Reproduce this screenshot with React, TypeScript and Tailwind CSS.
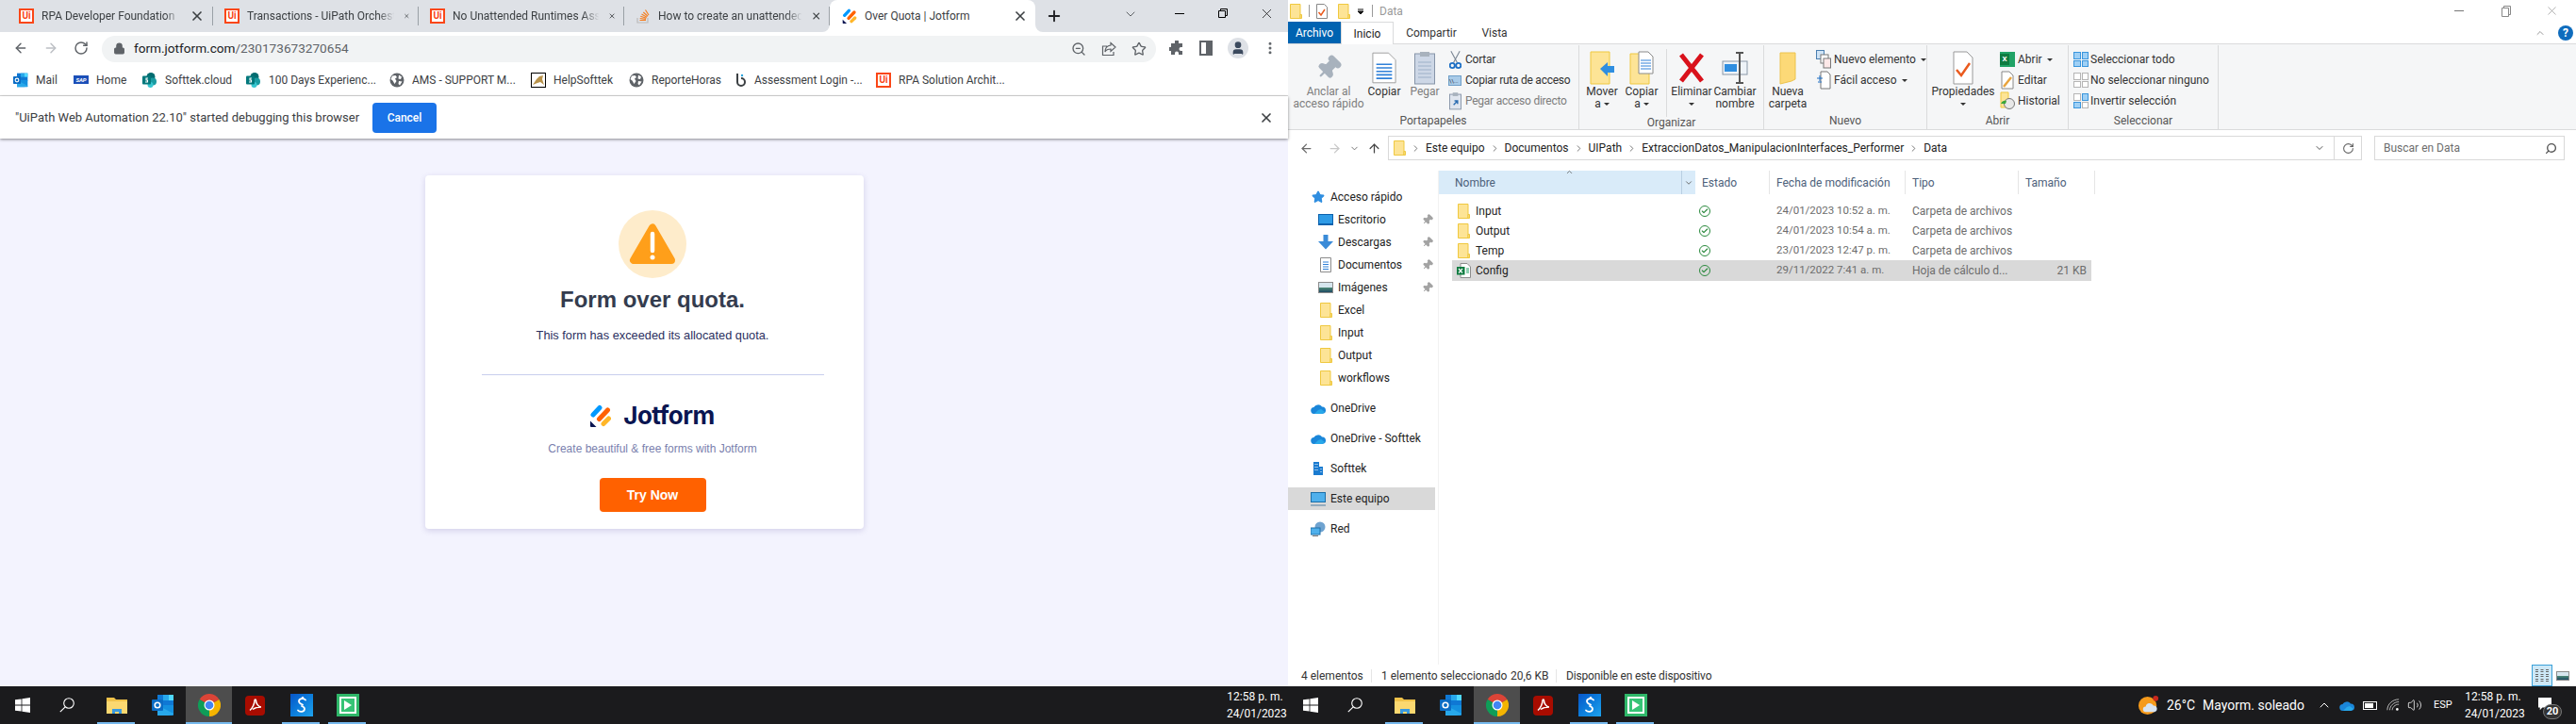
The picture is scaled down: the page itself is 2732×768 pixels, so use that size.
import { ArrowLeft, ArrowRight, ArrowUp, Check, ChevronDown, ChevronRight, ChevronUp, Lock, MoreVertical, Pin, Plus, RotateCw, Search, Star, User, Volume2, X, ZoomOut } from "lucide-react"
import type { ReactNode } from "react"

function UiIcon() {
  return (
    <div className="w-4 h-4 shrink-0 border-2 border-[#fa4616] bg-white flex items-center justify-center text-[10px] leading-none font-bold text-[#fa4616]">Ui</div>
  )
}

function JotMark({ className }: { className?: string }) {
  return (
    <svg viewBox="0 0 22 24" className={className}>
      <path d="M3 11 10 3.500" stroke="#0099ff" strokeWidth="5" strokeLinecap="round" />
      <path d="M9.500 15.500 18.500 6" stroke="#ff6100" strokeWidth="5" strokeLinecap="round" />
      <path d="M14 20.500 19.500 15" stroke="#ffb629" strokeWidth="5" strokeLinecap="round" />
      <path d="M0 17.500 6.500 24H1a1 1 0 0 1-1-1z" fill="#0a1551" />
    </svg>
  )
}

function Globe() {
  return (
    <svg viewBox="0 0 16 16" className="w-4 h-4 shrink-0">
      <circle cx="8" cy="8" r="7.500" fill="#5f6368" />
      <path d="M3 3.500 6.500 3 8 5 6 6.500 7.500 9 5.500 12 3.500 8.500 1.500 7zM10 2.500l3 2-1 2.500-2.500-.5zM10 9l3.500.5L11 13.500 9.500 12z" fill="#fff" />
    </svg>
  )
}

function SharePoint() {
  return (
    <svg viewBox="0 0 16 16" className="w-4 h-4 shrink-0">
      <circle cx="9" cy="4.500" r="4.500" fill="#036c70" />
      <circle cx="11" cy="9.500" r="4" fill="#1a9ba1" />
      <circle cx="8.500" cy="13" r="3" fill="#37c6d0" />
      <rect x="0" y="3.500" width="9" height="9" rx="1" fill="#03787c" />
      <path d="M6 6H4v2h1.500v2H3" fill="none" stroke="#fff" strokeWidth="1.100" />
    </svg>
  )
}

function OutlookIcon({ className }: { className?: string }) {
  return (
    <svg viewBox="0 0 24 24" className={className}>
      <rect x="6" y="1" width="17" height="12" fill="#0f78d4" />
      <rect x="12" y="1" width="6" height="6" fill="#28a8ea" />
      <rect x="18" y="1" width="5" height="6" fill="#50d9ff" />
      <path d="M6 12h17v10a1 1 0 0 1-1 1H6z" fill="#1490df" />
      <path d="m6 12 17 9v1l-6 1H6z" fill="#28a8ea" />
      <rect x="0" y="6" width="12" height="12" rx="1" fill="#0b6cc4" />
      <circle cx="6" cy="12" r="2.800" fill="none" stroke="#fff" strokeWidth="1.600" />
    </svg>
  )
}

function Bookmarks() {
  const items: { icon: ReactNode; label: string; w: number }[] = [
    { icon: <OutlookIcon className="w-4 h-4 shrink-0" />, label: "Mail", w: 23 },
    { icon: <div className="w-4 h-[9px] shrink-0 bg-[#1b4fb8] text-white text-[6px] leading-[9px] font-bold text-center italic">SAP</div>, label: "Home", w: 32 },
    { icon: <SharePoint />, label: "Softtek.cloud", w: 69 },
    { icon: <SharePoint />, label: "100 Days Experienc...", w: 111 },
    { icon: <Globe />, label: "AMS - SUPPORT M...", w: 109 },
    {
      icon: (
        <div className="w-4 h-4 shrink-0 border border-black bg-white flex items-end">
          <svg viewBox="0 0 14 14" className="w-full h-full"><path d="M1 12 5 6l3-3 4-1-1 4 2 6-4-3-3 1z" fill="#b8924a" /></svg>
        </div>
      ),
      label: "HelpSofttek",
      w: 63,
    },
    { icon: <Globe />, label: "ReporteHoras", w: 72 },
    {
      icon: (
        <svg viewBox="0 0 12 16" className="w-3 h-4 shrink-0">
          <path d="M2 1v9a4 4 0 1 0 4-4" fill="none" stroke="#3c4043" strokeWidth="2" />
          <circle cx="7" cy="3" r="1.200" fill="#29a3dc" />
        </svg>
      ),
      label: "Assessment Login -...",
      w: 112,
    },
    { icon: <UiIcon />, label: "RPA Solution Archit...", w: 111 },
  ]
  return (
    <div className="h-[34px] bg-white border-b border-[#d9d9d9] flex items-center pl-[14px] gap-[17px] text-xs text-[#3c4043]">
      {items.map((b) => (
        <div key={b.label} className="flex items-center gap-2">
          {b.icon}
          <span className="whitespace-nowrap" style={{ width: b.w }}>{b.label}</span>
        </div>
      ))}
    </div>
  )
}

function ChromeTab({ title, icon, active }: { title: string; icon: ReactNode; active?: boolean }) {
  if (active) {
    return (
      <div className="relative w-[218px] h-[34px] bg-white rounded-t-lg flex items-center pl-[13px] pr-[8px] gap-2 text-xs text-[#3c4043]">
        <svg viewBox="0 0 8 8" className="absolute -left-2 bottom-0 w-2 h-2" fill="#fff"><path d="M8 0v8H0a8 8 0 0 0 8-8z" /></svg>
        <svg viewBox="0 0 8 8" className="absolute -right-2 bottom-0 w-2 h-2" fill="#fff"><path d="M0 0v8h8a8 8 0 0 1-8-8z" /></svg>
        {icon}
        <span className="flex-1 whitespace-nowrap">{title}</span>
        <X className="w-4 h-4 text-[#3c4043]" strokeWidth={2.500} />
      </div>
    )
  }
  return (
    <div className="w-[218px] h-[34px] flex items-center">
      <div className="w-full h-[20px] flex items-center pl-3 pr-[7px] gap-2 border-r border-[#9aa0a6] text-xs text-[#3c4043]">
        {icon}
        <span className="flex-1 whitespace-nowrap [mask-image:linear-gradient(to_right,black_88%,transparent_99%)]">{title}</span>
        <X className="w-4 h-4 mr-px text-[#3c4043]" strokeWidth={2.500} />
      </div>
    </div>
  )
}

function ChromeWindow() {
  const stack = (
    <svg viewBox="0 0 16 16" className="w-4 h-4 shrink-0" fill="none" stroke="#f48024" strokeWidth="1.200">
      <path d="M2 10v5h11v-5" stroke="#bcbbbb" />
      <path d="M4.500 12.500h6.500M4.700 10.500l6.300.8M5.300 8.300l6.100 2M6.500 6l5.500 3.200M8.300 4l4.800 4.300M10.500 1.500l3.500 5.500" />
    </svg>
  )
  return (
    <div className="flex-1 flex flex-col min-h-0">
      <div className="h-[34px] bg-[#dee1e6] flex pl-2">
        <ChromeTab title="RPA Developer Foundation" icon={<UiIcon />} />
        <ChromeTab title="Transactions - UiPath Orchest" icon={<UiIcon />} />
        <ChromeTab title="No Unattended Runtimes Ass" icon={<UiIcon />} />
        <ChromeTab title="How to create an unattendec" icon={stack} />
        <ChromeTab title="Over Quota | Jotform" active icon={<JotMark className="w-4 h-4 shrink-0" />} />
        <div className="w-10 flex items-center justify-center">
          <Plus className="w-[18px] h-[18px] text-[#202124]" strokeWidth={2.500} />
        </div>
        <div className="flex-1" />
        <div className="w-[58px] pt-[7px] flex justify-center"><ChevronDown className="w-4 h-4 text-[#3c4043]" strokeWidth={1.200} /></div>
        <div className="w-[46px] pt-[7px] flex justify-center"><div className="w-[10px] h-px bg-black mt-[7px]" /></div>
        <div className="w-[46px] pt-[9px] flex justify-center">
          <svg viewBox="0 0 10 10" className="w-[10px] h-[10px]" fill="none" stroke="#000"><path d="M.500 2.500h7v7h-7zM2.500 2.500v-2h7v7h-2" /></svg>
        </div>
        <div className="w-[46px] pt-[6px] flex justify-center"><X className="w-[17px] h-[17px] text-black" strokeWidth={1} /></div>
      </div>

      <div className="h-[34px] bg-white flex items-center text-[#5f6368]">
        <div className="w-[108px] flex items-center pl-[14px] gap-4">
          <ArrowLeft className="w-4 h-4" strokeWidth={2.200} />
          <ArrowRight className="w-4 h-4 text-[#bcbfc4]" strokeWidth={2.200} />
          <RotateCw className="w-4 h-4" strokeWidth={2.200} />
        </div>
        <div className="w-[1118px] h-7 mt-px rounded-full bg-[#f1f3f4] flex items-center pl-[12px] pr-[10px]">
          <Lock className="w-[13px] h-[13px] fill-[#5f6368]" />
          <span className="ml-[9px] text-[13.6px] text-[#202124]">form.jotform.com<span className="text-[#5f6368]">/230173673270654</span></span>
          <div className="flex-1" />
          <ZoomOut className="w-4 h-4" />
          <svg viewBox="0 0 16 16" className="w-4 h-4 ml-4" fill="none" stroke="#5f6368" strokeWidth="1.200">
            <path d="M10 1.500 15 6l-5 4.500V8C7 8 5 9 4 11c0-4 2-6.500 6-7zM13 11v3.500H1.500V5H6" />
          </svg>
          <Star className="w-4 h-4 ml-4" strokeWidth={2} />
        </div>
        <div className="flex items-center pl-[14px] gap-[16px]">
          <svg viewBox="0 0 16 16" className="w-4 h-4" fill="#5f6368">
            <path d="M6 1a2 2 0 0 1 4 0v2h4v4h-1.500a2 2 0 0 0 0 4H14v4h-4v-1.500a2 2 0 0 0-4 0V15H2v-4H.5a2 2 0 0 1 0-4H2V3h4z" />
          </svg>
          <div className="w-[14px] h-[16px] border-2 border-[#5f6368] flex justify-end"><div className="w-[5px] h-full bg-[#5f6368]" /></div>
          <div className="w-[22px] h-[22px] rounded-full bg-[#dee1e6] flex items-center justify-center">
            <User className="w-4 h-4 fill-[#3c4a5e] text-[#3c4a5e]" />
          </div>
          <MoreVertical className="w-4 h-4 -ml-[1px]" strokeWidth={2.500} />
        </div>
      </div>

      <Bookmarks />

      <div className="relative z-10 h-[45px] bg-white flex items-center pl-4 pr-[15px] shadow-[0_1px_3px_rgba(0,0,0,0.45)] text-[13px] text-[#3c4043]">
        <span className="w-[367px] whitespace-nowrap">"UiPath Web Automation 22.10" started debugging this browser</span>
        <button className="ml-3 w-[68px] h-8 rounded bg-[#1a73e8] text-white text-xs font-medium">Cancel</button>
        <div className="flex-1" />
        <X className="w-4 h-4" strokeWidth={2.500} />
      </div>

      <div className="flex-1 bg-[#f3f3fe] flex justify-center font-['Liberation_Sans',sans-serif]">
        <div className="w-[465px] h-[375px] mt-[39px] pl-[18px] bg-white rounded shadow-[0_2px_6px_rgba(86,70,150,0.2)] flex flex-col items-center">
          <svg viewBox="0 0 72 72" className="w-[72px] h-[72px] mt-[37px]">
            <circle cx="36" cy="36" r="36" fill="#feeccb" />
            <path d="M36 18.500 16 53h40z" fill="#ff9f1a" stroke="#ff9f1a" strokeWidth="8" strokeLinejoin="round" />
            <path d="M36 25v18" stroke="#fff" strokeWidth="4.500" strokeLinecap="round" />
            <circle cx="36" cy="50" r="2.500" fill="#fff" />
          </svg>
          <h1 className="mt-2 h-[30px] text-2xl leading-[30px] font-bold text-[#343c4e]">Form over quota.</h1>
          <p className="mt-[14px] h-[18px] text-[12.8px] leading-[18px] text-[#2b3060]">This form has exceeded its allocated quota.</p>
          <div className="mt-8 w-[363px] h-px bg-[#c8ceed]" />
          <div className="mt-[31px] h-6 flex items-center gap-[13px]">
            <JotMark className="w-[22px] h-6" />
            <span className="text-[26px] leading-6 font-bold tracking-[-0.5px] font-['Inter',sans-serif] text-[#0a1551]">Jotform</span>
          </div>
          <p className="mt-[15px] h-4 text-xs leading-4 text-[#7a7fae]">Create beautiful &amp; free forms with Jotform</p>
          <button className="mt-[23px] w-[113px] h-9 rounded-sm bg-[#ff6100] text-white text-sm font-bold">Try Now</button>
        </div>
      </div>
    </div>
  )
}

function Folder({ className = "w-[13px] h-4 shrink-0" }: { className?: string }) {
  return (
    <svg viewBox="0 0 13 16" className={className}>
      <path d="M.500.500h10.500v15H.500z" fill="#fde496" stroke="#efc83f" />
      <path d="M11 11.500h1.500v4H11z" fill="#fde496" stroke="#efc83f" />
    </svg>
  )
}

function Caret() {
  return <span className="inline-block w-0 h-0 border-x-[3px] border-x-transparent border-t-[3px] border-t-[#333] align-middle" />
}

function BigBtn({ w, icon, children, muted }: { w: number; icon: ReactNode; children: ReactNode; muted?: boolean }) {
  return (
    <div className="shrink-0 flex flex-col items-center" style={{ width: w }}>
      <div className="h-[37px] mt-[5px] flex items-center justify-center">{icon}</div>
      <div className={`mt-[1px] text-xs leading-[13px] text-center whitespace-nowrap ${muted ? "text-[#7d7d7d]" : "text-[#333]"}`}>{children}</div>
    </div>
  )
}

function SmallBtn({ icon, label, caret, muted, tight, iconW = 16 }: { icon: ReactNode; label: string; caret?: boolean; muted?: boolean; tight?: boolean; iconW?: number }) {
  return (
    <div className={`h-[22px] flex items-center gap-[2px] text-xs whitespace-nowrap ${muted ? "text-[#7d7d7d]" : "text-[#333]"}`}>
      <div className="flex justify-center" style={{ width: iconW }}>{icon}</div>
      <span className={tight ? "tracking-[-0.25px]" : ""}>{label}</span>
      {caret && <span className="ml-[3px]"><Caret /></span>}
    </div>
  )
}

function Group({ w, label, children }: { w: number; label: string; children: ReactNode }) {
  return (
    <div className="shrink-0 h-full flex flex-col pb-[1px] border-r border-[#dadbdc]" style={{ width: w }}>
      <div className="h-[74px] flex">{children}</div>
      <div className="h-[16px] text-xs leading-4 text-center text-[#555]">{label}</div>
    </div>
  )
}

function Page({ lines, className = "w-7 h-9" }: { lines: string; className?: string }) {
  return (
    <svg viewBox="0 0 28 36" className={className}>
      <path d="M1 1h18l8 8v26H1z" fill="#fff" stroke="#9a9a9a" />
      <path d="M5 14h18M5 18h18M5 22h18M5 26h18M5 30h18" stroke={lines} strokeWidth="1.800" />
    </svg>
  )
}

function Ribbon() {
  return (
    <div className="h-[92px] bg-[#f5f6f7] border-y border-[#dadbdc] flex pt-[1px]">
      <Group w={309} label="Portapapeles">
        <div className="w-[8px]" />
        <BigBtn w={70} muted icon={<Pin className="w-7 h-7 rotate-45 text-[#a8b2bd] fill-[#a8b2bd]" />}>Anclar al<br />acceso rápido</BigBtn>
        <BigBtn w={48} icon={<Page lines="#2f80d8" className="w-[26px] h-9" />}>Copiar</BigBtn>
        <BigBtn w={38} muted icon={
          <svg viewBox="0 0 22 36" className="w-[22px] h-9">
            <rect x=".5" y="3" width="21" height="32" fill="#cdd7e6" stroke="#8694a8" />
            <rect x="6" y="1" width="10" height="5" fill="#a8b2bd" />
            <path d="M4 12h14M4 16h14M4 20h14M4 24h14M4 28h14" stroke="#9db0c8" />
          </svg>
        }>Pegar</BigBtn>
        <div className="w-[4px]" />
        <div className="pt-[4px]">
          <SmallBtn tight iconW={18} icon={
            <svg viewBox="0 0 14 22" className="w-[13px] h-[21px]" fill="none" stroke="#7b8794" strokeWidth="1.200">
              <path d="M2 1l7 13M12 1 5 14" />
              <circle cx="3.500" cy="17.500" r="2.800" stroke="#1d6fc4" strokeWidth="2" />
              <circle cx="10.500" cy="17.500" r="2.800" stroke="#1d6fc4" strokeWidth="2" />
            </svg>
          } label="Cortar" />
          <SmallBtn tight iconW={18} icon={<div className="w-[14px] h-[11px] bg-[#a9cbe8] border border-[#6f9fc8] text-[6px] leading-[9px] text-[#223]">\\...</div>} label="Copiar ruta de acceso" />
          <SmallBtn tight iconW={18} muted icon={
            <svg viewBox="0 0 14 20" className="w-[13px] h-[19px]">
              <rect x=".5" y="2" width="13" height="17" fill="#dfe5ee" stroke="#8694a8" />
              <rect x="4" y="0" width="6" height="4" fill="#a8b2bd" />
              <path d="M5 14l4-4M6 9.500h3.500V13" stroke="#2b6cb0" strokeWidth="1.500" fill="none" />
            </svg>
          } label="Pegar acceso directo" />
        </div>
      </Group>

      <Group w={196} label="Organizar">
        <BigBtn w={48} icon={
          <svg viewBox="0 0 26 36" className="w-[26px] h-9">
            <path d="M1 1h20v34H1z" fill="#fde496" stroke="#efc83f" />
            <path d="M11 19l8-7v4h7v7h-7v4z" fill="#2f8ee0" />
          </svg>
        }>Mover<br />a <Caret /></BigBtn>
        <BigBtn w={36} icon={
          <svg viewBox="0 0 26 36" className="w-[26px] h-9">
            <path d="M1 3h20v32H1z" fill="#fde496" stroke="#efc83f" />
            <path d="M10 1h10l5 5v18H10z" fill="#fff" stroke="#8a8a8a" />
            <path d="M12 10h11M12 13h11M12 16h11M12 19h11" stroke="#2f80d8" />
          </svg>
        }>Copiar<br />a <Caret /></BigBtn>
        <div className="w-px h-[72px] mt-[4px] ml-[8px] mr-[3px] bg-[#dadbdc]" />
        <BigBtn w={46} icon={
          <svg viewBox="0 0 26 32" className="w-[26px] h-8"><path d="M2 2l22 28M24 2 2 30" stroke="#d9111b" strokeWidth="5" /></svg>
        }>Eliminar<br /><Caret /></BigBtn>
        <BigBtn w={46} icon={
          <svg viewBox="0 0 28 36" className="w-7 h-9" fill="none">
            <rect x="1" y="11" width="26" height="14" fill="#eef3f8" stroke="#8a98a8" />
            <rect x="3" y="14" width="13" height="8" fill="#2f8ee0" />
            <path d="M19 2v32M15 2h8M15 34h8" stroke="#555" strokeWidth="2" />
          </svg>
        }>Cambiar<br />nombre</BigBtn>
      </Group>

      <Group w={173} label="Nuevo">
        <BigBtn w={50} icon={
          <svg viewBox="0 0 18 36" className="w-[18px] h-9"><path d="M1 2h16v28l-4 2-12 3z" fill="#fcd977" stroke="#ecc34d" /></svg>
        }>Nueva<br />carpeta</BigBtn>
        <div className="w-[4px]" />
        <div className="pt-[4px]">
          <SmallBtn iconW={18} caret icon={
            <svg viewBox="0 0 16 20" className="w-4 h-[20px]">
              <rect x=".5" y=".5" width="8" height="9" fill="#cfe3f5" stroke="#4b7fb0" />
              <rect x="5" y="5" width="8" height="9" fill="#fff" stroke="#777" />
              <rect x="8" y="9" width="7.500" height="10" fill="#fde8e8" stroke="#777" />
            </svg>
          } label="Nuevo elemento" />
          <SmallBtn iconW={18} caret icon={
            <svg viewBox="0 0 16 20" className="w-4 h-[20px]" fill="none">
              <path d="M5 1h7l3 3v15H5z" fill="#fff" stroke="#777" />
              <path d="M1 8h6M4 5v6M2 12h4" stroke="#1d6fc4" />
            </svg>
          } label="Fácil acceso" />
        </div>
      </Group>

      <Group w={150} label="Abrir">
        <BigBtn w={76} icon={
          <svg viewBox="0 0 22 36" className="w-[22px] h-9">
            <path d="M1 1h14l6 6v28H1z" fill="#fff" stroke="#999" />
            <path d="M4 20l5 6 9-13" fill="none" stroke="#ea5a1e" strokeWidth="2.500" />
          </svg>
        }><span>Propiedades</span><br /><Caret /></BigBtn>
        <div className="pt-[4px]">
          <SmallBtn iconW={18} caret icon={
            <div className="relative w-4 h-4 bg-[#21a366]"><div className="absolute left-0 top-[2px] w-[10px] h-3 bg-[#107c41] text-white text-[8px] leading-3 font-bold text-center">X</div></div>
          } label="Abrir" />
          <SmallBtn iconW={18} icon={
            <svg viewBox="0 0 14 20" className="w-[14px] h-[20px]" fill="none">
              <path d="M1 1h8l4 4v14H1z" fill="#fff" stroke="#888" />
              <path d="M3 17l8-10" stroke="#e8a33d" strokeWidth="2.500" />
            </svg>
          } label="Editar" />
          <SmallBtn iconW={18} icon={
            <svg viewBox="0 0 16 20" className="w-4 h-[20px]">
              <path d="M1 1h8v16H1z" fill="#fde496" stroke="#efc83f" />
              <circle cx="10" cy="13" r="5.500" fill="#e8e8e8" stroke="#777" />
              <path d="M1 13c1-3 4-4 6-3l-1 3z" fill="#3aa63a" />
            </svg>
          } label="Historial" />
        </div>
      </Group>

      <Group w={159} label="Seleccionar">
        <div className="pt-[4px] pl-[5px]">
          <SmallBtn iconW={16} icon={<SelGrid cells={["on", "on", "on", "on"]} />} label="Seleccionar todo" />
          <SmallBtn iconW={16} icon={<SelGrid cells={["off", "off", "off", "off"]} />} label="No seleccionar ninguno" />
          <SmallBtn iconW={16} icon={<SelGrid cells={["off", "on", "on", "off"]} />} label="Invertir selección" />
        </div>
      </Group>
      <div className="flex-1" />
    </div>
  )
}

function SelGrid({ cells }: { cells: string[] }) {
  return (
    <div className="w-4 h-4 grid grid-cols-2 gap-px">
      {cells.map((c, i) => (
        <div key={i} className={c === "on" ? "bg-[#9fd0f5] border border-[#3a96dd]" : "bg-white border border-[#b5b5b5]"} />
      ))}
    </div>
  )
}

function AddressBar() {
  const crumbs = ["Este equipo", "Documentos", "UIPath", "ExtraccionDatos_ManipulacionInterfaces_Performer", "Data"]
  return (
    <div className="h-[43px] bg-white flex items-start pt-[6px] text-xs">
      <div className="w-[106px] h-[26px] flex items-center pl-[12px] text-[#6b6b6b]">
        <ArrowLeft className="w-[15px] h-[15px]" />
        <ArrowRight className="w-[15px] h-[15px] ml-[15px] text-[#c8c8c8]" />
        <ChevronDown className="w-[11px] h-[11px] ml-[8px]" />
        <ArrowUp className="w-[15px] h-[15px] ml-[8px] text-[#444]" />
      </div>
      <div className="w-[1033px] h-[26px] border border-[#d9d9d9] flex items-center pl-[5px]">
        <Folder />
        {crumbs.map((c) => (
          <div key={c} className="flex items-center">
            <ChevronRight className="w-[11px] h-[11px] mx-[5px] text-[#6b6b6b]" />
            <span className="text-[#222] whitespace-nowrap">{c}</span>
          </div>
        ))}
        <div className="flex-1" />
        <ChevronDown className="w-3 h-3 mr-[9px] text-[#555]" />
        <div className="w-[29px] h-full border-l border-[#d9d9d9] flex items-center justify-center">
          <RotateCw className="w-[13px] h-[13px] text-[#666]" />
        </div>
      </div>
      <div className="ml-[13px] w-[202px] h-[26px] border border-[#d9d9d9] flex items-center pl-[9px] pr-[7px] text-[#6d6d6d]">
        <span className="flex-1">Buscar en Data</span>
        <Search className="w-[13px] h-[13px] -scale-x-100 text-[#555]" strokeWidth={2.500} />
      </div>
    </div>
  )
}

function CloudIcon({ className = "w-4 h-[11px]" }: { className?: string }) {
  return (
    <svg viewBox="0 0 16 11" className={className}>
      <path d="M4 11a3.500 3.500 0 0 1-.5-7A5 5 0 0 1 12 3.500 3.500 3.500 0 0 1 12.500 11z" fill="#1a86d9" />
      <path d="M4 11 8 7l3-1 4 3-2.500 2z" fill="#28a8ea" />
    </svg>
  )
}

function NavPane() {
  const pinned = [
    {
      label: "Escritorio",
      icon: <div className="w-4 h-[12px] bg-[#2e9be6] border border-[#0c62ad] border-b-2" />,
    },
    {
      label: "Descargas",
      icon: (
        <svg viewBox="0 0 16 16" className="w-4 h-4"><path d="M5.500 0h5v7H16l-8 8.500L0 7h5.500z" fill="#3a8bd8" /></svg>
      ),
    },
    {
      label: "Documentos",
      icon: (
        <svg viewBox="0 0 12 16" className="w-3 h-4">
          <path d="M.500.500h11v15H.500z" fill="#fff" stroke="#8c8c8c" />
          <path d="M3 5h6M3 7.500h6M3 10h6M3 12.500h6" stroke="#2f80d8" />
        </svg>
      ),
    },
    {
      label: "Imágenes",
      icon: (
        <div className="w-4 h-[12px] border border-[#8c8c8c] bg-[linear-gradient(#d6e6ee_50%,#4d8a76_50%,#1f4a63)]" />
      ),
    },
  ]
  const Row = ({ icon, label, sub, pin, active, gap }: { icon: ReactNode; label: string; sub?: boolean; pin?: boolean; active?: boolean; gap?: boolean }) => (
    <div className={`h-6 flex items-center text-xs text-[#222] ${gap ? "mt-2" : ""} ${active ? "bg-[#d9d9d9]" : ""} ${sub ? "pl-[32px]" : "pl-6"}`}>
      <div className="w-4 flex justify-center">{icon}</div>
      <span className="flex-1 ml-[5px] whitespace-nowrap">{label}</span>
      {pin && <Pin className="w-3 h-3 mr-[2px] rotate-45 text-[#a3a3a3] fill-[#a3a3a3]" />}
    </div>
  )
  return (
    <div className="w-[160px] h-full pt-4 border-r border-[#f2f2f2] pr-[3px] shrink-0">
      <Row label="Acceso rápido" icon={<Star className="w-[14px] h-[14px] text-[#2f8ee0] fill-[#2f8ee0]" />} />
      {pinned.map((p) => <Row key={p.label} sub pin label={p.label} icon={p.icon} />)}
      {["Excel", "Input", "Output", "workflows"].map((n) => <Row key={n} sub label={n} icon={<Folder />} />)}
      <Row gap label="OneDrive" icon={<CloudIcon />} />
      <Row gap label="OneDrive - Softtek" icon={<CloudIcon />} />
      <Row gap label="Softtek" icon={
        <svg viewBox="0 0 10 14" className="w-[10px] h-[14px]">
          <path d="M0 0h6v14H0zM6 5h4v9H6z" fill="#1a7bd0" />
          <path d="M1.500 2h1v1h-1zM3.500 2h1v1h-1zM1.500 5h1v1h-1zM3.500 5h1v1h-1zM1.500 8h1v1h-1zM3.500 8h1v1h-1zM7.500 7h1v1h-1zM7.500 10h1v1h-1z" fill="#fff" />
        </svg>
      } />
      <Row gap active label="Este equipo" icon={
        <svg viewBox="0 0 16 15" className="w-4 h-[15px]">
          <rect x=".5" y=".5" width="15" height="10" fill="#4fb0ec" stroke="#1c6fa8" />
          <path d="M0 14h16" stroke="#7d9db5" strokeWidth="1.500" />
        </svg>
      } />
      <Row gap label="Red" icon={
        <svg viewBox="0 0 16 16" className="w-4 h-4">
          <circle cx="10" cy="6" r="5.500" fill="#6fa3d0" />
          <rect x="0" y="7" width="10" height="7" fill="#4fb0ec" stroke="#1c6fa8" />
          <path d="M2 15.500h6" stroke="#777" />
        </svg>
      } />
    </div>
  )
}

function ExcelFile() {
  return (
    <svg viewBox="0 0 15 16" className="w-[15px] h-4 shrink-0">
      <path d="M4 .500h7l3.500 3.500v11.500H4z" fill="#fff" stroke="#8c8c8c" />
      <path d="M10 6h3M10 8h3M10 10h3" stroke="#21a366" />
      <rect x="0" y="4" width="8.500" height="8.500" fill="#107c41" />
      <path d="M2 6l4 4.500M6 6l-4 4.500" stroke="#fff" strokeWidth="1.200" />
    </svg>
  )
}

function FileList() {
  const rows = [
    { name: "Input", date: "24/01/2023 10:52 a. m.", type: "Carpeta de archivos", size: "" },
    { name: "Output", date: "24/01/2023 10:54 a. m.", type: "Carpeta de archivos", size: "" },
    { name: "Temp", date: "23/01/2023 12:47 p. m.", type: "Carpeta de archivos", size: "" },
    { name: "Config", date: "29/11/2022 7:41 a. m.", type: "Hoja de cálculo d...", size: "21 KB", selected: true },
  ]
  return (
    <div className="flex-1 min-w-0 text-xs">
      <div className="h-[25px] flex text-[#4c607a]">
        <div className="relative w-[272px] h-full bg-[#d9ebf9] flex items-center pl-[17px]">
          <span className="flex-1">Nombre</span>
          <ChevronUp className="absolute left-[134px] -top-[3px] w-[9px] h-[9px] text-[#555]" />
          <div className="w-[15px] h-full border-l border-[#b8cfe3] flex items-center justify-center">
            <ChevronDown className="w-[10px] h-[10px] text-[#555]" />
          </div>
        </div>
        {[
          { t: "Estado", w: 79 },
          { t: "Fecha de modificación", w: 144 },
          { t: "Tipo", w: 120 },
          { t: "Tamaño", w: 81 },
        ].map((c) => (
          <div key={c.t} className="h-full flex items-center pl-[7px] border-r border-[#e5e5e5]" style={{ width: c.w }}>{c.t}</div>
        ))}
      </div>
      <div className="mt-[7px] ml-[14px] w-[678px]">
        {rows.map((r) => (
          <div key={r.name} className={`flex items-center text-[#6d6d6d] ${r.selected ? "bg-[#d9d9d9] h-[22px]" : "h-[21px]"}`}>
            <div className="w-[258px] flex items-center pl-[5px] gap-[5px] text-[#222]">
              {r.selected ? <ExcelFile /> : <div className="w-[15px] flex justify-center"><Folder /></div>}
              <span>{r.name}</span>
            </div>
            <div className="w-[79px] pl-[4px]">
              <div className="w-3 h-3 rounded-full border-[1.500px] border-[#2b8a3e] flex items-center justify-center">
                <Check className="w-2 h-2 text-[#2b8a3e]" strokeWidth={3.500} />
              </div>
            </div>
            <div className="w-[144px] pl-[7px] text-[11.5px] whitespace-nowrap">{r.date}</div>
            <div className="w-[120px] pl-[7px] whitespace-nowrap">{r.type}</div>
            <div className="w-[77px] pr-[5px] text-right">{r.size}</div>
          </div>
        ))}
      </div>
    </div>
  )
}

function Explorer() {
  return (
    <div className="flex-1 flex flex-col min-h-0 bg-white">
      <div className="h-[23px] flex items-center pl-[2px] text-xs">
        <Folder />
        <div className="w-px h-[13px] mx-[7px] bg-[#999]" />
        <svg viewBox="0 0 12 16" className="w-3 h-4">
          <path d="M.500.500h8l3 3v12h-11z" fill="#fff" stroke="#888" />
          <path d="M2.500 9l2.500 3 4-6" fill="none" stroke="#ea5a1e" strokeWidth="1.500" />
        </svg>
        <div className="w-[11px]" />
        <Folder />
        <svg viewBox="0 0 8 8" className="w-2 h-2 ml-[7px]"><path d="M1 2h6M1 4l3 3 3-3z" stroke="#111" fill="#111" /></svg>
        <div className="w-px h-[13px] ml-[8px] mr-[7px] bg-[#999]" />
        <span className="text-[#999]">Data</span>
        <div className="flex-1" />
        <div className="w-[10px] h-px bg-[#777] mr-[40px]" />
        <svg viewBox="0 0 10 12" className="w-[10px] h-3 mr-[36px]" fill="none" stroke="#888"><path d="M.500 2.500h7v9h-7zM2.500 2.500v-2h7v9h-2" /></svg>
        <X className="w-[15px] h-[15px] mr-[18px] text-[#888]" strokeWidth={1} />
      </div>
      <div className="h-[23px] flex items-center text-xs relative">
        <div className="w-14 h-full bg-[#0063b1] text-white flex items-center justify-center">Archivo</div>
        <div className="relative z-10 w-14 h-[24px] mt-[1px] bg-white border-x border-t border-[#dadbdc] flex items-center justify-center text-[#222]">Inicio</div>
        <div className="w-20 text-center text-[#333]">Compartir</div>
        <div className="w-[54px] text-center text-[#333]">Vista</div>
        <div className="flex-1" />
        <ChevronUp className="w-3 h-3 mr-[13px] text-[#999]" />
        <div className="w-4 h-4 mr-[3px] rounded-full bg-[#0f6cbd] text-white text-[12px] leading-4 font-bold text-center">?</div>
      </div>
      <Ribbon />
      <AddressBar />
      <div className="flex-1 flex min-h-0">
        <NavPane />
        <FileList />
      </div>
      <div className="h-[23px] flex items-center pl-[14px] text-xs text-[#333]">
        <span className="w-[64px] whitespace-nowrap">4 elementos</span>
        <div className="w-px h-[14px] mx-[10px] bg-[#e5e5e5]" />
        <span className="w-[130px] whitespace-nowrap">1 elemento seleccionado</span>
        <span className="ml-[7px] w-[38px] whitespace-nowrap">20,6 KB</span>
        <div className="w-px h-[14px] mx-[10px] bg-[#e5e5e5]" />
        <span className="whitespace-nowrap tracking-[-0.15px]">Disponible en este dispositivo</span>
        <div className="flex-1" />
        <div className="w-[22px] h-[23px] bg-[#cde8f7] border border-[#3aa0d8] grid grid-cols-1 content-center gap-[2px] px-[3px]">
          <div className="h-[3px] border-y border-dashed border-[#666]" />
          <div className="h-[3px] border-y border-dashed border-[#666]" />
          <div className="h-[3px] border-y border-dashed border-[#666]" />
        </div>
        <div className="ml-[4px] mr-[7px] w-[14px] h-[10px] border border-[#8c8c8c] bg-[linear-gradient(#d6e6ee_50%,#4d8a76_50%,#1f4a63)]" />
      </div>
    </div>
  )
}

function ChromeLogo() {
  return (
    <svg viewBox="0 0 24 24" className="w-6 h-6">
      <path d="M12 12 1.600 6A12 12 0 0 1 22.400 6z" fill="#db4437" />
      <path d="M12 12 22.400 6A12 12 0 0 1 12 24z" fill="#f4b400" />
      <path d="M12 12 12 24A12 12 0 0 1 1.600 6z" fill="#0f9d58" />
      <circle cx="12" cy="12" r="5.500" fill="#fff" />
      <circle cx="12" cy="12" r="4.300" fill="#4285f4" />
    </svg>
  )
}

function TaskButton({ children, on, active }: { children: ReactNode; on?: boolean; active?: boolean }) {
  return (
    <div className={`relative w-[49px] h-full flex items-center justify-center shrink-0 ${active ? "bg-[#4d4d4d]" : ""}`}>
      {children}
      {on && <div className={`absolute bottom-0 h-[2px] bg-[#76b9ed] ${active ? "left-0 right-0" : "left-1 right-[5px]"}`} />}
    </div>
  )
}

function Taskbar({ tray }: { tray: ReactNode }) {
  return (
    <div className="h-10 shrink-0 bg-[#1b1b1d] flex items-center text-white text-xs">
      <div className="w-12 flex justify-center">
        <svg viewBox="0 0 16 16" className="w-4 h-4" fill="#fff">
          <path d="M0 2.300 6.600 1.400v6.200H0zM7.400 1.300 16 0v7.600H7.400zM0 8.400h6.600v6.200L0 13.700zM7.400 8.400H16V16l-8.600-1.300z" />
        </svg>
      </div>
      <div className="w-[46px] mr-[5px] flex justify-center">
        <svg viewBox="0 0 16 16" className="w-4 h-4" fill="none" stroke="#fff" strokeWidth="1.100">
          <circle cx="10" cy="6" r="5.300" />
          <path d="M6.200 9.800.8 15.200" />
        </svg>
      </div>
      <TaskButton on>
        <svg viewBox="0 0 22 18" className="w-[22px] h-[18px]">
          <path d="M0 1h8l2 2h12v15H0z" fill="#f0c24a" />
          <path d="M0 5h22v13H0z" fill="#fbd870" />
          <path d="M6 18v-5h10v5h-3v-2H9v2z" fill="#3a9ae0" />
        </svg>
      </TaskButton>
      <TaskButton><OutlookIcon className="w-6 h-6" /></TaskButton>
      <TaskButton on active><ChromeLogo /></TaskButton>
      <TaskButton>
        <div className="w-[21px] h-[21px] rounded bg-[#a80c00] flex items-center justify-center">
          <svg viewBox="0 0 14 14" className="w-[14px] h-[14px]" fill="none" stroke="#fff" strokeWidth="1.500">
            <path d="M1 12.500C4 10 6 5 6 2c0-1.500 1.500-1.500 1.500 0C7.500 5 10 9 13 9c-3 0-7 1-9 2.500" />
          </svg>
        </div>
      </TaskButton>
      <TaskButton on>
        <div className="w-6 h-6 bg-linear-to-br from-[#0a55c8] to-[#1fa3ee] flex items-center justify-center">
          <svg viewBox="0 0 12 18" className="w-3 h-[18px]" fill="none" stroke="#fff" strokeWidth="1.800" strokeLinecap="round">
            <path d="M10 3.500C8 1 3 2 3 5c0 2 3 3 4 3.500M2 14.500c2 2.500 7 1.500 7-1.500 0-1.500-1.500-2.500-3-3" />
            <circle cx="7" cy="1.200" r=".4" />
          </svg>
        </div>
      </TaskButton>
      <TaskButton on>
        <div className="w-6 h-6 bg-[#2fb769] flex items-center justify-center">
          <div className="w-[18px] h-[18px] border-2 border-white bg-[#36c476] flex items-center justify-center">
            <div className="w-0 h-0 border-y-[5px] border-y-transparent border-l-[8px] border-l-white" />
          </div>
        </div>
      </TaskButton>
      <div className="flex-1" />
      {tray}
    </div>
  )
}

function Clock() {
  return (
    <div className="w-[60px] text-center leading-[18px] whitespace-nowrap text-xs">
      <div>12:58 p. m.</div>
      <div>24/01/2023</div>
    </div>
  )
}

function Tray() {
  return (
    <div className="flex items-center h-full">
      <svg viewBox="0 0 24 24" className="w-[23px] h-[23px]">
        <circle cx="10" cy="12" r="10" fill="#f59a1b" />
        <path d="M8 19a3 3 0 0 1 0-6 4.500 4.500 0 0 1 8.500-1 3.500 3.500 0 0 1 4 3.500 3.500 3.500 0 0 1-2.500 3.500z" fill="#d7e3f1" />
        <circle cx="19" cy="4" r="3" fill="#c8281e" />
      </svg>
      <span className="ml-[7px] w-[29px] text-sm whitespace-nowrap">26°C</span>
      <span className="ml-[9px] w-[107px] text-sm whitespace-nowrap">Mayorm. soleado</span>
      <ChevronUp className="ml-[14px] w-[16px] h-[16px]" strokeWidth={1.500} />
      <CloudIcon className="ml-[8px] w-4 h-[11px]" />
      <div className="ml-[9px] w-[15px] h-[9px] border border-white p-px"><div className="w-[9px] h-full bg-white" /></div>
      <svg viewBox="0 0 16 16" className="ml-[10px] w-[14px] h-[14px]" fill="none" stroke="#ccc" strokeWidth="1">
        <path d="M1 14C1 7 7 1 15 1M4 14c0-5 5-10 11-10M7 14c0-3 3-7 8-7" />
        <circle cx="13" cy="13" r="1.500" fill="#fff" stroke="none" />
      </svg>
      <Volume2 className="ml-[8px] w-4 h-4" strokeWidth={1.200} />
      <span className="ml-[12px] w-[20px] text-[11px]">ESP</span>
      <div className="ml-[13px]"><Clock /></div>
      <div className="relative ml-[17px] mr-[25px] w-[16px] h-[16px]">
        <svg viewBox="0 0 16 16" className="w-4 h-[14px]" fill="#fff"><path d="M0 0h16v12H5l-3 3v-3H0z" /></svg>
        <div className="absolute -right-[10px] top-[7px] w-[20px] h-[16px] rounded-full bg-[#333] border border-[#777] text-[11px] leading-[14px] font-bold text-center">20</div>
      </div>
    </div>
  )
}

export default function App() {
  return (
    <div className="w-[2732px] h-[768px] flex overflow-hidden font-['Roboto',sans-serif]">
      <div className="w-[1366px] h-full flex flex-col">
        <ChromeWindow />
        <Taskbar tray={<div className="mr-[5px]"><Clock /></div>} />
      </div>
      <div className="w-[1366px] h-full flex flex-col">
        <Explorer />
        <Taskbar tray={<Tray />} />
      </div>
    </div>
  )
}
